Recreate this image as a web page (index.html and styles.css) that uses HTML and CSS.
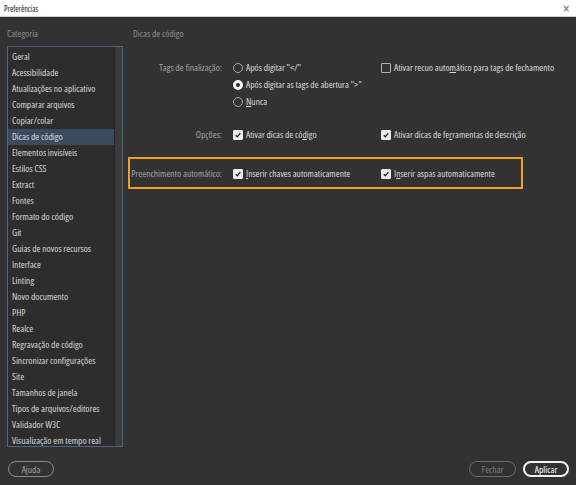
FILE: index.html
```html
<!DOCTYPE html>
<html lang="pt">
<head>
<meta charset="utf-8">
<title>Preferências</title>
<link rel="stylesheet" href="styles.css">
</head>
<body>
<div class="window">
  <div class="titlebar">
    <span class="title">Preferências</span>
    <span class="close">×</span>
  </div>
  <div class="main">
    <div class="sidebar">
      <div class="section-title">Categoria</div>
      <div class="list">
        <ul class="items">
          <li>Geral</li>
          <li>Acessibilidade</li>
          <li>Atualizações no aplicativo</li>
          <li>Comparar arquivos</li>
          <li>Copiar/colar</li>
          <li class="sel">Dicas de código</li>
          <li>Elementos invisíveis</li>
          <li>Estilos CSS</li>
          <li>Extract</li>
          <li>Fontes</li>
          <li>Formato do código</li>
          <li>Git</li>
          <li>Guias de novos recursos</li>
          <li>Interface</li>
          <li>Linting</li>
          <li>Novo documento</li>
          <li>PHP</li>
          <li>Realce</li>
          <li>Regravação de código</li>
          <li>Sincronizar configurações</li>
          <li>Site</li>
          <li>Tamanhos de janela</li>
          <li>Tipos de arquivos/editores</li>
          <li>Validador W3C</li>
          <li>Visualização em tempo real</li>
        </ul>
        <div class="scrollbar"></div>
      </div>
    </div>
    <div class="panel">
      <div class="section-title panel-title">Dicas de código</div>
      <div class="row tags">
        <div class="label">Tags de finalização:</div>
        <div class="ctl">
          <div class="opt"><span class="radio"></span>Após di<u>g</u>itar "&lt;/"</div>
          <div class="opt"><span class="radio on"></span>Após digitar as ta<u>g</u>s de abertura "&gt;"</div>
          <div class="opt"><span class="radio"></span><u>N</u>unca</div>
        </div>
        <div class="ctl2">
          <div class="opt"><span class="check"></span>Ativar recuo auto<u>m</u>ático para tags de fechamento</div>
        </div>
      </div>
      <div class="row opcoes">
        <div class="label">Opções:</div>
        <div class="ctl">
          <div class="opt"><span class="check on"><svg viewBox="0 0 10 10"><path d="M2.2 5.2 L4.2 7.3 L7.9 2.7" /></svg></span>Ativar dicas de có<u>d</u>igo</div>
        </div>
        <div class="ctl2">
          <div class="opt"><span class="check on"><svg viewBox="0 0 10 10"><path d="M2.2 5.2 L4.2 7.3 L7.9 2.7" /></svg></span>Ativar dicas de fe<u>r</u>ramentas de descrição</div>
        </div>
      </div>
      <div class="row highlight">
        <div class="label">Preenchimento automático:</div>
        <div class="ctl">
          <div class="opt"><span class="check on"><svg viewBox="0 0 10 10"><path d="M2.2 5.2 L4.2 7.3 L7.9 2.7" /></svg></span><u>I</u>nserir chaves automaticamente</div>
        </div>
        <div class="ctl2">
          <div class="opt"><span class="check on"><svg viewBox="0 0 10 10"><path d="M2.2 5.2 L4.2 7.3 L7.9 2.7" /></svg></span>I<u>n</u>serir aspas automaticamente</div>
        </div>
      </div>
    </div>
  </div>
  <div class="footer">
    <button class="btn help">Ajuda</button>
    <div class="actions">
      <button class="btn close-btn">Fechar</button>
      <button class="btn apply">Aplicar</button>
    </div>
  </div>
</div>
</body>
</html>
```

FILE: styles.css
```css
html, body {
  margin: 0;
  padding: 0;
  background: #323232;
}
body {
  font-family: "Open Sans", "Liberation Sans", sans-serif;
  font-stretch: 75%;
  font-size: 9.5px;
  color: #d6d6d6;
}
.window {
  width: 576px;
  height: 485px;
  display: flex;
  flex-direction: column;
  overflow: hidden;
}
.titlebar {
  height: 17px;
  box-sizing: border-box;
  background: #ffffff;
  border-bottom: 1px solid #d0d0d0;
  display: flex;
  align-items: center;
  justify-content: space-between;
  padding: 0 6px 0 4px;
}
.title {
  font-size: 8px;
  color: #111;
}
.close {
  font-family: "DejaVu Sans", sans-serif;
  font-size: 10px;
  color: #555;
}
.main {
  display: flex;
  height: 430px;
}
.sidebar {
  margin-left: 7px;
  width: 116px;
}
.section-title {
  margin-top: 10px;
  height: 14px;
  line-height: 14px;
  color: #8e8e8e;
  margin-bottom: 5px;
}
.list {
  height: 401px;
  box-sizing: border-box;
  border: 1px solid #4b6687;
  background: #2d2d2d;
  display: flex;
  overflow: hidden;
}
.items {
  flex: 1;
  margin: 0;
  padding: 2px 0 0 0;
  list-style: none;
  min-width: 0;
}
.items li {
  height: 16px;
  line-height: 16px;
  padding-left: 4px;
  white-space: nowrap;
  color: #d8d8d8;
}
.items li.sel {
  background: #3b4b5f;
}
.scrollbar {
  width: 7px;
  border-left: 1px solid #262626;
  background: #3b3b3b;
}
.panel {
  margin-left: 5px;
  width: 395px;
}
.panel-title {
  padding-left: 5px;
  margin-bottom: 16px;
}
.row {
  display: grid;
  grid-template-columns: 92px 159px 1fr;
  border: 2px solid transparent;
  box-sizing: border-box;
  width: 395px;
  margin-bottom: 12px;
}
.label {
  text-align: right;
  color: #a2a2a2;
  line-height: 17px;
  height: 17px;
  white-space: nowrap;
}
.ctl {
  padding-left: 11px;
}
.opt {
  height: 17px;
  line-height: 17px;
  display: flex;
  align-items: center;
  white-space: nowrap;
  color: #dadada;
}
.opt u {
  text-underline-offset: 1px;
}
.radio {
  width: 10px;
  height: 10px;
  box-sizing: border-box;
  border: 1px solid #a8a8a8;
  border-radius: 50%;
  margin-right: 3px;
  flex: none;
}
.radio.on {
  border: 3px solid #f4f4f4;
  background: #2a2a2a;
}
.check {
  width: 10px;
  height: 10px;
  box-sizing: border-box;
  border: 1px solid #b4b4b4;
  border-radius: 1px;
  margin-right: 3px;
  flex: none;
  display: flex;
}
.check.on {
  background: #ececec;
  border-color: #ececec;
}
.check svg {
  width: 100%;
  height: 100%;
}
.check path {
  fill: none;
  stroke: #222;
  stroke-width: 1.7;
}
.highlight {
  border-color: #f0a02a;
  padding: 6px 0 5px 0;
}
.footer {
  margin-top: 14px;
  height: 16px;
  display: flex;
  justify-content: space-between;
  padding: 0 7px 0 8px;
}
.actions {
  display: flex;
  gap: 7px;
}
.btn {
  font-family: inherit;
  font-stretch: inherit;
  font-size: 9.5px;
  height: 16px;
  padding: 0;
  background: transparent;
  border-radius: 8px;
  box-sizing: border-box;
}
.help {
  width: 46px;
  border: 1px solid #8a8a8a;
  color: #a0a0a0;
}
.close-btn {
  width: 47px;
  border: 1px solid #6a6a6a;
  color: #7e7e7e;
}
.apply {
  width: 46px;
  border: 2px solid #f2f2f2;
  color: #ffffff;
}
```
